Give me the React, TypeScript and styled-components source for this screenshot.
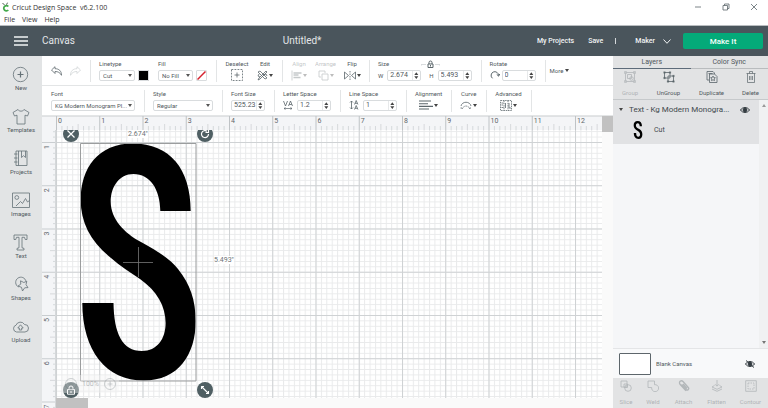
import React from "react";
import styled, { createGlobalStyle } from "styled-components";

const Global = createGlobalStyle`
  * { box-sizing: border-box; }
  html, body { margin: 0; }
  body, button, input, select {
    font-family: Roboto, "Liberation Sans", sans-serif;
    font-size: 6px;
    line-height: 9px;
    color: #50585d;
  }
  button { border: 0; padding: 0; background: none; cursor: pointer; }
  svg { display: block; flex: none; }
`;

const INCH = 43.25;

/* ---------- frame ---------- */
const App = styled.div`
  display: flex;
  flex-direction: column;
  height: 100vh;
  min-height: 400px;
  overflow: hidden;
  background: #fff;
`;
const TitleBar = styled.div`
  display: flex;
  align-items: center;
  justify-content: space-between;
  height: 14px;
  padding: 0 10px 0 1px;
  color: #333;
  font-family: "Open Sans", sans-serif;
`;
const AppName = styled.div`
  display: flex;
  align-items: center;
  gap: 2px;
  white-space: pre;
  font-size: 7px;
`;
const WindowButtons = styled.div`
  display: flex;
  align-items: center;
  gap: 20px;
`;
const MenuBar = styled.nav`
  display: flex;
  gap: 7px;
  height: 12px;
  padding: 0 4px;
  border-bottom: 1px solid #b9bdc0;
  button { font-family: "Open Sans", sans-serif; font-size: 7px; line-height: 11px; color: #333; }
`;
const Header = styled.header`
  display: grid;
  grid-template-columns: 14px 22% 1fr auto;
  align-items: center;
  height: 30px;
  padding: 0 5px 0 14px;
  column-gap: 14px;
  background: #4a555c;
  color: #e3e6e8;
  h1, h2 { margin: 0; font-size: 10px; line-height: 12px; font-weight: 400; }
`;
const DocTitle = styled.h2`
  padding-left: 62px;
`;
const HeaderActions = styled.div`
  display: flex;
  align-items: center;
  gap: 12px;
`;
const HeaderButton = styled.button`
  display: flex;
  align-items: center;
  gap: 8px;
  color: #f1f3f4;
  font-size: 7px;
  font-weight: 500;
  &:first-child { margin-right: 2px; }
`;
const HeaderRule = styled.span`
  width: 1px;
  height: 6px;
  margin-right: 7px;
  background: #d5d9dc;
`;
const MakeButton = styled.button`
  width: 80px;
  height: 16px;
  border-radius: 2px;
  background: #04aa79;
  color: #f4fffb;
  font-size: 8px;
  font-weight: 500;
`;
const Body = styled.div`
  display: flex;
  flex: 1;
  min-height: 0;
`;

/* ---------- left rail ---------- */
const Sidebar = styled.nav`
  width: 42px;
  flex: none;
  padding-top: 6px;
  background: #e2e4e5;
`;
const SideButton = styled.button`
  display: flex;
  flex-direction: column;
  align-items: center;
  width: 100%;
  height: 42px;
  padding-top: 3px;
`;

/* ---------- edit toolbars ---------- */
const Workspace = styled.main`
  display: flex;
  flex-direction: column;
  flex: 1;
  min-width: 0;
`;
const ToolRow = styled.div`
  display: flex;
  height: 30px;
  padding-left: 1px;
  border-bottom: 1px solid #e3e5e6;
  overflow: hidden;
`;
const Group = styled.div<{ $gap?: number }>`
  display: flex;
  flex: none;
  align-items: flex-start;
  gap: ${(p) => p.$gap ?? 8}px;
  height: 22px;
  margin-top: 4px;
  padding: 0 9px 0 8px;
  border-right: 1px solid #e3e5e6;
`;
const History = styled(Group)`
  align-items: center;
`;
const Field = styled.div<{ $center?: boolean; $faded?: boolean; $width?: number }>`
  display: flex;
  flex-direction: column;
  align-items: ${(p) => (p.$center ? "center" : "flex-start")};
  gap: 1px;
  width: ${(p) => (p.$width ? `${p.$width}px` : "auto")};
  margin-top: -1px;
  opacity: ${(p) => (p.$faded ? 0.35 : 1)};
  white-space: nowrap;
`;
const FieldRow = styled.div<{ $gap?: number }>`
  display: flex;
  align-items: center;
  gap: ${(p) => p.$gap ?? 3}px;
  height: 12px;
`;
const SelectBox = styled.span<{ $width: number }>`
  position: relative;
  width: ${(p) => p.$width}px;
  height: 11px;
  select {
    display: block;
    width: 100%;
    height: 100%;
    padding: 0 7px 0 3px;
    border: 1px solid #d9dcde;
    border-radius: 2px;
    background: #fff;
    appearance: none;
  }
  &::after {
    content: "";
    position: absolute;
    top: 4px;
    right: 3px;
    border: 2px solid transparent;
    border-top: 3px solid #555;
    border-bottom: 0;
    pointer-events: none;
  }
`;
const NumberBox = styled.span<{ $width: number }>`
  display: flex;
  align-items: center;
  width: ${(p) => p.$width}px;
  height: 11px;
  border: 1px solid #d9dcde;
  border-radius: 2px;
  background: #fff;
  input {
    flex: 1;
    min-width: 0;
    height: 9px;
    padding: 0 0 0 2px;
    border: 0;
    background: none;
    font-size: 7px;
  }
`;
const Swatch = styled.button<{ $color: string }>`
  width: 11px;
  height: 11px;
  border: 1px solid #d9dcde;
  border-radius: 1px;
  background: ${(p) => p.$color};
`;
const IconButton = styled.button`
  display: flex;
  align-items: center;
  height: 12px;
  gap: 1px;
`;
const MoreButton = styled.button`
  display: flex;
  align-items: center;
  gap: 2px;
  padding-left: 4px;
`;
const SizeHead = styled.div`
  display: flex;
  align-items: flex-end;
  gap: 32px;
  height: 9px;
`;

/* ---------- canvas ---------- */
const CanvasArea = styled.section`
  display: grid;
  grid-template-columns: 14px 1fr 11px;
  grid-template-rows: 14px 1fr 10px;
  flex: 1;
  min-height: 0;
  background: #f4f5f7;
`;
const TopRuler = styled.svg`
  grid-column: 1 / 3;
  width: 100%;
  height: 14px;
`;
const SideRuler = styled.svg`
  grid-row: 2 / 4;
  grid-column: 1;
  width: 14px;
  height: 100%;
  min-height: 0;
`;
const VerticalTrack = styled.div`
  grid-column: 3;
  grid-row: 1 / 4;
  background: #fafafa;
  &::before { content: ""; display: block; height: 16px; background: #c1c1c1; }
`;
const HorizontalTrack = styled.div`
  grid-column: 2;
  grid-row: 3;
  background: #fafafa;
  &::before { content: ""; display: block; width: 32px; height: 100%; background: #c1c1c1; }
`;
const Stage = styled.div`
  position: relative;
  grid-column: 2;
  grid-row: 2;
  overflow: hidden;
  background: #fff;
`;
const Grid = styled.svg`
  position: absolute;
  inset: 0;
  width: 100%;
  height: 100%;
`;
const Selection = styled.div`
  position: absolute;
  left: 24px;
  top: 13px;
  width: 117px;
  height: 239px;
`;
const Handle = styled.button<{ $right?: boolean; $bottom?: boolean }>`
  position: absolute;
  left: ${(p) => (p.$right ? 117 : -17)}px;
  top: ${(p) => (p.$bottom ? 239 : -17)}px;
  width: 16px;
  height: 16px;
  border-radius: 50%;
  background: #4f5f63;
  svg { margin: auto; }
`;
const Dimension = styled.span<{ $side?: boolean }>`
  position: absolute;
  left: ${(p) => (p.$side ? 134 : 48)}px;
  top: ${(p) => (p.$side ? 113 : -13)}px;
  background: #fff;
  color: #6d7376;
  font-size: 7px;
  line-height: 8px;
`;
const ZoomControl = styled.div`
  position: absolute;
  left: 6px;
  bottom: 5px;
  display: flex;
  align-items: center;
  gap: 5px;
  padding: 3px;
  border-radius: 2px;
  background: #f3f3f366;
  button, span { opacity: 0.35; }
  span { font-size: 7px; }
`;

/* ---------- layers panel ---------- */
const Panel = styled.aside`
  display: flex;
  flex-direction: column;
  flex: none;
  width: 155px;
  background: #f5f6f8;
`;
const Tabs = styled.div`
  display: flex;
  background: #e2e3e4;
`;
const Tab = styled.button<{ $active?: boolean }>`
  flex: 1;
  height: 13px;
  border-bottom: 1px solid ${(p) => (p.$active ? "#5d6b79" : "#b9bcbe")};
  font-size: 7px;
`;
const ActionRow = styled.div<{ $footer?: boolean }>`
  display: grid;
  grid-template-columns: ${(p) => (p.$footer ? "26px 28px 33px 33px 1fr" : "34px 43px 43px 1fr")};
  height: ${(p) => (p.$footer ? 30 : 31)}px;
  padding-top: 2px;
  border-bottom: ${(p) => (p.$footer ? 0 : 1)}px solid #c6c9cb;
  background: #e2e3e4;
`;
const Action = styled.button<{ $faded?: boolean }>`
  display: flex;
  flex-direction: column;
  align-items: center;
  gap: 5px;
  height: 26px;
  opacity: ${(p) => (p.$faded ? 0.35 : 1)};
`;
const LayerList = styled.div`
  display: flex;
  flex: 1;
  min-height: 0;
`;
const Layers = styled.div`
  flex: 1;
  min-width: 0;
`;
const LayerGroup = styled.div`
  height: 44px;
  background: #e1e2e4;
  color: #41494e;
`;
const LayerTitle = styled.div`
  display: flex;
  align-items: center;
  gap: 6px;
  height: 19px;
  padding: 0 9px 0 6px;
  font-size: 8px;
  white-space: nowrap;
  button { margin-left: auto; }
`;
const LayerItem = styled.div`
  display: flex;
  align-items: center;
  gap: 11px;
  height: 22px;
  padding-left: 20px;
  font-size: 7px;
`;
const Scrollbar = styled.div`
  display: flex;
  flex-direction: column;
  justify-content: space-between;
  align-items: center;
  width: 9px;
  padding: 4px 0;
  background: #f0f1f2;
`;
const BlankRow = styled.div`
  display: flex;
  align-items: center;
  gap: 5px;
  height: 30px;
  padding: 0 13px 0 6px;
  border-top: 1px solid #e4e5e7;
  background: #f8f9fa;
  button:last-child { margin-left: auto; }
`;
const CanvasSwatch = styled.button`
  width: 32px;
  height: 22px;
  border: 1px solid #5d666b;
  border-radius: 1px;
  background: #fff;
`;

/* ---------- icons ---------- */
type IconProps = { w: number; h?: number; color?: string; sw?: number; children: React.ReactNode };
const Icon = ({ w, h = w, color = "#5b666b", sw = 0.8, children }: IconProps) => (
  <svg width={w} height={h} viewBox={`0 0 ${w} ${h}`} fill="none" stroke={color} strokeWidth={sw} strokeLinejoin="round" aria-hidden="true">
    {children}
  </svg>
);
const Caret = () => (
  <Icon w={4} h={3}><path d="M0 0h4L2 3z" fill="#444" stroke="none" /></Icon>
);
const Spinner = () => (
  <Icon w={8} h={9}>
    <path d="M.5 0v9" stroke="#e1e3e4" />
    <path d="M2.300 4L4.300 1.200 6.300 4zM2.300 5.300h4L4.300 8z" fill="#444" stroke="none" />
  </Icon>
);

const sideItems: { label: string; art: React.ReactNode }[] = [
  { label: "New", art: <><circle cx="8.500" cy="9.500" r="7.200" /><path d="M8.500 6.500v6M5.500 9.500h6" strokeWidth="1.200" /></> },
  { label: "Templates", art: <path d="M6 2.500L1 5.500l1.500 3.500 2.500-.8V17h8V8.200l2.500.8L17 5.500l-5-3c-.8 2.200-5.200 2.200-6 0z" /> },
  { label: "Projects", art: <path d="M4 2h11v14.500H4zM6.500 2v14.500M9.500 2v6.500l2-1.800 2 1.800V2M2 5h3.500M2 9h3.500M2 13h3.500" /> },
  { label: "Images", art: <><rect x=".5" y="2" width="17" height="14.500" /><circle cx="4.800" cy="6.500" r="1.900" /><path d="M4 15l4.500-4.500 2 2 3-5 2 3.500 2-1.500" /></> },
  { label: "Text", art: <path d="M2 2h13v4.500h-1.800L12.500 4.300H10v10.500l2 .6v1.600H5v-1.600l2-.6V4.300H4.500L3.800 6.500H2z" /> },
  { label: "Shapes", art: <path d="M6.500 12A5.200 5.200 0 1 1 14 6.500M8.500 5.800l3.300 1.700 3-1.200-.8 3.300 2 3-3.300.2-2.200 3.200-1-3.700-3.500-1.200 2.800-2z" /> },
  { label: "Upload", art: <><path d="M4.500 15a3.500 3.500 0 0 1-.5-6.800A4.700 4.700 0 0 1 12.500 7.500 3.700 3.700 0 0 1 13 15z" /><path d="M7.300 13V11H5.800L8.500 7.800 11.200 11H9.700v2z" /></> },
];

const EyeArt = () => (
  <>
    <path d="M.5 4C2.500.7 7.500.7 9.500 4 7.500 7.300 2.500 7.300.5 4z" />
    <circle cx="5" cy="4" r="1.900" fill="#333b40" />
  </>
);

const actions: { label: string; faded?: boolean; art: React.ReactNode }[] = [
  { label: "Group", faded: true, art: <><path d="M1.500 1.500h9v9h-9z" /><path d="M3.500 3.500h4v4h-4z" /><circle cx="7.500" cy="7.500" r="1.800" /><path d="M.5.5h2v2h-2zM9.500.5h2v2h-2zM.5 9.500h2v2h-2zM9.500 9.500h2v2h-2z" fill="#8b9296" strokeWidth=".5" /></> },
  { label: "UnGroup", art: <><path d="M1.500 1.500h5.500v5.500H1.500zM5 5h5.500v5.500H5z" /><path d="M.7.700h1.600v1.600H.7zM6.200.700h1.600v1.600H6.200zM.7 6.200h1.600v1.600H.7zM9.700 4.200h1.600v1.600H9.700zM4.200 9.700h1.600v1.600H4.200zM9.700 9.700h1.600v1.600H9.700z" fill="#5b666b" strokeWidth=".3" /></> },
  { label: "Duplicate", art: <><path d="M3 9H1V.5h6L8.500 2v1M3.500 3h5L11 5.500v6H3.500z" /><path d="M7 5l.7 1.500 1.700.2-1.200 1.200.3 1.700L7 8.800l-1.500.8.3-1.700-1.200-1.200 1.700-.2zM2.500 2.500h4" /></> },
  { label: "Delete", art: <path d="M1.500 2.500h9M4.500 2.500v-2h3v2M2.500 2.500v9h7v-9M4.500 5v4M6 5v4M7.500 5v4" strokeWidth=".7" /> },
];

const footerActions: { label: string; art: React.ReactNode }[] = [
  { label: "Slice", art: <><path d="M1 1h6v6H1z" /><circle cx="8" cy="8" r="3.300" /><path d="M4 4h3.500v3.500H4z" /></> },
  { label: "Weld", art: <path d="M1 1h6.500v3.700A3.500 3.500 0 1 1 4.700 7.500H1z" /> },
  { label: "Attach", art: <path d="M3.500 4.500l4.500 5a1.500 1.500 0 0 0 2.300-2L5 1.500A2 2 0 0 0 2 4.200l6 6.500M5 4l4 4.500" strokeWidth="1.300" /> },
  { label: "Flatten", art: <path d="M6 0v6M4 4.200l2 2 2-2M3.500 5.500L1 7l5 2.300L11 7 8.500 5.500M1 9l5 2.300L11 9" /> },
  { label: "Contour", art: <><path d="M.7.700h10.600v10.600H.7z" /><path d="M3 3h6v6H3z" strokeDasharray="1.500 1" /></> },
];

/* ---------- field helpers ---------- */
const Select = ({ id, label, value, width, children }: { id: string; label: string; value: string; width: number; children?: React.ReactNode }) => (
  <Field>
    <label htmlFor={id}>{label}</label>
    <FieldRow>
      <SelectBox $width={width}>
        <select id={id} defaultValue={value}><option>{value}</option></select>
      </SelectBox>
      {children}
    </FieldRow>
  </Field>
);
const NumberInput = ({ id, value, width = 34 }: { id: string; value: string; width?: number }) => (
  <NumberBox $width={width}>
    <input id={id} defaultValue={value} />
    <Spinner />
  </NumberBox>
);
const Tool = ({ label, width, faded, caret = true, children }: { label: string; width?: number; faded?: boolean; caret?: boolean; children: React.ReactNode }) => (
  <Field $center $faded={faded} $width={width}>
    <span>{label}</span>
    <IconButton aria-label={label} disabled={faded}>{children}{caret && <Caret />}</IconButton>
  </Field>
);

/* ---------- rulers ---------- */
const ticks = (count: number) => Array.from({ length: count }, (_, i) => i);
const HorizontalRuler = () => (
  <TopRuler>
    <path d="M0 .5H3000" stroke="#dfe1e3" />
    {ticks(101).map((i) => {
      const x = 14.5 + (i * INCH) / 8;
      const top = i % 8 === 0 ? 0 : i % 4 === 0 ? 8 : 10;
      return <path key={i} d={`M${x} ${top}V14`} stroke={i % 8 === 0 ? "#bfc3c6" : "#c9cdd0"} strokeWidth={i % 8 === 0 ? 1 : 0.7} />;
    })}
    {ticks(13).map((n) => <text key={n} x={16 + n * INCH} y={7} fill="#5f666b" fontSize={7}>{n}</text>)}
  </TopRuler>
);
const VerticalRuler = () => (
  <SideRuler>
    {ticks(72).map((i) => {
      const n = i - 2;
      const y = 12.5 + (n * INCH) / 8;
      const left = n % 8 === 0 ? 0 : n % 4 === 0 ? 8 : 11;
      return <path key={i} d={`M${left} ${y}H14`} stroke="#c9cdd0" strokeWidth={n % 8 === 0 ? 1 : 0.7} />;
    })}
    {ticks(7).map((n) => (
      <text key={n} transform={`translate(7 ${19 + n * INCH}) rotate(-90)`} fill="#5f666b" fontSize={7}>{n + 1}</text>
    ))}
    <path d="M13.500 0V3000" stroke="#d5d8da" />
  </SideRuler>
);

const LETTER_S =
  "M80.3 68C80 46 70 31 53.500 31C39 31 30.700 44 30.700 59C31 76 44 90 61 99C80 109 92 118 98 126C110 141 115.700 157 115.700 178C115.700 212 98 237.500 64 237.500C26 237.500 2.500 208 2.300 160H33.500C34 190 42 208 62 208C77 208 85.600 196 85.600 180C85.600 163 77 148 60 136C50 129 40 123 31 115C11 99 .700 80 .700 57C.700 25 18 .500 53 .500C90 .500 110.700 26 110.700 68Z";

export default function DesignSpace() {
  return (
    <App>
      <Global />
      <TitleBar>
        <AppName>
          <Icon w={9} h={10} color="#45a94c" sw={1.8}>
            <path d="M7.300 4.500A2.600 2.600 0 1 0 7.300 8" />
            <path d="M3.500 3L1.500 1M5.500 2.700L6.500.7" stroke="#4d5a50" strokeWidth="1" />
          </Icon>
          <span>Cricut Design Space  v6.2.100</span>
        </AppName>
        <WindowButtons>
          <button aria-label="Minimize"><Icon w={8}><path d="M1 4h6" /></Icon></button>
          <button aria-label="Restore"><Icon w={8}><path d="M1 2.500h4.500V7H1zM2.500 2.500V1H7v4.500H5.500" /></Icon></button>
          <button aria-label="Close"><Icon w={8}><path d="M1 1l6 6M7 1L1 7" /></Icon></button>
        </WindowButtons>
      </TitleBar>
      <MenuBar>
        <button>File</button><button>View</button><button>Help</button>
      </MenuBar>

      <Header>
        <button aria-label="Menu"><Icon w={14} h={10} color="#f1f3f4" sw={1.3}><path d="M0 1h14M0 5h14M0 9h14" /></Icon></button>
        <h1>Canvas</h1>
        <DocTitle>Untitled*</DocTitle>
        <HeaderActions>
          <HeaderButton>My Projects</HeaderButton>
          <HeaderButton>Save</HeaderButton>
          <HeaderRule />
          <HeaderButton>Maker<Icon w={8} h={5} color="#f1f3f4" sw={1}><path d="M.5.5L4 4.300 7.500.5" /></Icon></HeaderButton>
          <MakeButton>Make It</MakeButton>
        </HeaderActions>
      </Header>

      <Body>
        <Sidebar>
          {sideItems.map((s) => (
            <SideButton key={s.label}>
              <Icon w={18} color="#657177">{s.art}</Icon>
              {s.label}
            </SideButton>
          ))}
        </Sidebar>

        <Workspace>
          <ToolRow>
            <History>
              <button aria-label="Undo"><Icon w={11} h={10}><path d="M.5 4L4 .7v2C8 2.700 10.500 5 10.500 9.300 9 6.500 7 5.500 4 5.500v2z" /></Icon></button>
              <button aria-label="Redo"><Icon w={11} h={10} color="#d0d4d6"><path d="M10.500 4L7 .7v2C3 2.700.5 5 .5 9.300 2 6.500 4 5.500 7 5.500v2z" /></Icon></button>
            </History>
            <Group $gap={9}>
              <Select id="linetype" label="Linetype" value="Cut" width={36}><Swatch $color="#000" aria-label="Linetype color" /></Select>
              <Select id="fill" label="Fill" value="No Fill" width={35}>
                <Swatch $color="#fff" aria-label="Fill color"><Icon w={9} color="#d5222f" sw={1.5}><path d="M.5 8.500L8.500.5" /></Icon></Swatch>
              </Select>
            </Group>
            <Group>
              <Tool label="Deselect" width={24} caret={false}>
                <Icon w={12}><path d="M.5.5h11v11H.5z" strokeDasharray="1.800 1.200" /><path d="M6 3.500v5M3.500 6h5" /></Icon>
              </Tool>
              <Tool label="Edit" width={16}>
                <Icon w={11}><path d="M1 2l7 7M3 1l7 7M1 2L3 1M10 8L8 9M10 2L3 9 1 10 2 8 9 1zM6 5l3-1 1 2M2 4L1 6l2 1" /></Icon>
              </Tool>
            </Group>
            <Group>
              <Tool label="Align" width={16} faded><Icon w={11}><path d="M1 .5v10" /><path d="M2.500 3h8M2.500 5h5M2.500 7.500h7" strokeWidth="1.300" /></Icon></Tool>
              <Tool label="Arrange" faded><Icon w={11}><path d="M3 7H1V1h6v2M4 4h6v6H4z" /></Icon></Tool>
              <Tool label="Flip" width={16}><Icon w={12} h={9}><path d="M.5 1v7L4.500 4.500zM11.500 1v7L7.500 4.500z" /><path d="M6 0v9" strokeDasharray="1.500 1" /></Icon></Tool>
            </Group>
            <Group>
              <Field>
                <SizeHead>
                  <span>Size</span>
                  <button aria-label="Lock proportions"><Icon w={19} h={8}><path d="M7 4h5v3.500H7zM8 4V2.500a1.500 1.500 0 0 1 3 0V4M9.500 5v1.500" strokeWidth="1" /><path d="M0 6V4.500h5M14 4.500h5V6" stroke="#cfd3d5" /></Icon></button>
                </SizeHead>
                <FieldRow $gap={4}>
                  <label htmlFor="w">W</label>
                  <NumberInput id="w" value="2.674" />
                  <span />
                  <label htmlFor="h">H</label>
                  <NumberInput id="h" value="5.493" />
                </FieldRow>
              </Field>
            </Group>
            <Group>
              <Field>
                <label htmlFor="rotate">Rotate</label>
                <FieldRow $gap={2}>
                  <Icon w={10} sw={1}><path d="M2.500 8.300A3.700 3.700 0 1 1 8.500 5.500M6.700 4.300l1.900 1.900L9.800 4" /></Icon>
                  <NumberInput id="rotate" value="0" />
                </FieldRow>
              </Field>
            </Group>
            <MoreButton>More <Caret /></MoreButton>
          </ToolRow>

          <ToolRow>
            <Group><Select id="font" label="Font" value="KG Modern Monogram Pl..." width={84} /></Group>
            <Group><Select id="style" label="Style" value="Regular" width={60} /></Group>
            <Group><Field $width={34}><label htmlFor="fs">Font Size</label><FieldRow><NumberInput id="fs" value="525.23" /></FieldRow></Field></Group>
            <Group>
              <Field $width={48}>
                <label htmlFor="ls">Letter Space</label>
                <FieldRow $gap={4}>
                  <Icon w={10}><path d="M.5 1l2 5 2-5M5.500 6l2-5 2 5M6.200 4.500h2.600" /><path d="M1 8.500h8M2.500 7.500L1 8.500l1.500 1M7.500 7.500l1.500 1-1.500 1" strokeWidth=".7" /></Icon>
                  <NumberInput id="ls" value="1.2" />
                </FieldRow>
              </Field>
            </Group>
            <Group>
              <Field $width={48}>
                <label htmlFor="lines">Line Space</label>
                <FieldRow $gap={4}>
                  <Icon w={10}><path d="M2.500 1v8M1 2.500L2.500 1 4 2.500M1 7.500L2.500 9 4 7.500M5.500 4.500l1.700-4 1.700 4M6 3.300h2.300M5.500 9.500l1.700-4 1.700 4M6 8.300h2.300" /></Icon>
                  <NumberInput id="lines" value="1" />
                </FieldRow>
              </Field>
            </Group>
            <Group><Tool label="Alignment"><Icon w={14} h={10} sw={1.1}><path d="M0 1h12M0 3.700h9M0 6.400h14M0 9h10" /></Icon></Tool></Group>
            <Group><Tool label="Curve"><Icon w={12} h={10}><path d="M1 6C2 1 10 1 11 6" /><path d="M2 9C4 5 8 5 10 9M.5 8h2M9.500 8h2" strokeDasharray="1.500 .8" /></Icon></Tool></Group>
            <Group><Tool label="Advanced"><Icon w={12} h={11}><path d="M.5.5h11v10H.5zM4 .5v10M8 .5v10" strokeDasharray="1.500 .8" /><path d="M1.500 3h2M1.500 5h1.500M1.500 7.500h2M5.500 3v5M9 3v5h2" /></Icon></Tool></Group>
          </ToolRow>

          <CanvasArea>
            <HorizontalRuler />
            <VerticalRuler />
            <VerticalTrack />
            <Stage>
              <Grid>
                <defs>
                  <pattern id="minor" width={INCH / 8} height={INCH / 8} x="0" y="12" patternUnits="userSpaceOnUse">
                    <path d={`M.5 0V${INCH}M0 .5H${INCH}`} stroke="#e9eaeb" strokeWidth="1" />
                  </pattern>
                  <pattern id="major" width={INCH} height={INCH} x="0" y="12" patternUnits="userSpaceOnUse">
                    <path d={`M.5 0V${INCH}M0 .5H${INCH}`} stroke="#cfd2d4" strokeWidth="1" />
                  </pattern>
                </defs>
                <rect width="100%" height="100%" fill="url(#minor)" />
                <rect width="100%" height="100%" fill="url(#major)" />
              </Grid>
              <Selection>
                <svg width="117" height="239" viewBox="0 0 117 239">
                  <path d={LETTER_S} fill="#000" />
                  <path d="M.5.5h115.500v237.500H.5z" fill="none" stroke="#9b9d9e" />
                  <path d="M43 119.500h30M58.500 104v30" stroke="#777" strokeWidth=".8" />
                </svg>
                <Dimension>2.674"</Dimension>
                <Dimension $side>5.493"</Dimension>
                <Handle aria-label="Delete selection"><Icon w={10} color="#fff" sw={1.2}><path d="M1.500 1.500l7 7M8.500 1.500l-7 7" /></Icon></Handle>
                <Handle $right aria-label="Rotate selection"><Icon w={10} color="#fff" sw={1.2}><path d="M8.500 5A3.500 3.500 0 1 1 7 2.200M8.500.5v3h-3" /></Icon></Handle>
                <Handle $bottom aria-label="Unlock proportions"><Icon w={10} color="#fff" sw={1}><path d="M1.500 4.500h7v4.700h-7zM3 4.500V3a2 2 0 0 1 4 0v1.500M5 6v2" /></Icon></Handle>
                <Handle $right $bottom aria-label="Resize selection"><Icon w={10} color="#fff" sw={1.1}><path d="M1.500 1.500l7 7M1.500 4V1.500H4M8.500 6v2.500H6" /></Icon></Handle>
              </Selection>
              <ZoomControl>
                <button aria-label="Zoom out"><Icon w={12}><circle cx="6" cy="6" r="5.500" /><path d="M3.500 6h5" /></Icon></button>
                <span>100%</span>
                <button aria-label="Zoom in"><Icon w={12}><circle cx="6" cy="6" r="5.500" /><path d="M3.500 6h5M6 3.500v5" /></Icon></button>
              </ZoomControl>
            </Stage>
            <HorizontalTrack />
          </CanvasArea>
        </Workspace>

        <Panel>
          <Tabs><Tab $active>Layers</Tab><Tab>Color Sync</Tab></Tabs>
          <ActionRow>
            {actions.map((a) => <Action key={a.label} $faded={a.faded} disabled={a.faded}><Icon w={12}>{a.art}</Icon>{a.label}</Action>)}
          </ActionRow>
          <LayerList>
            <Layers>
              <LayerGroup>
                <LayerTitle>
                  <Caret />
                  <span>Text - Kg Modern Monogra...</span>
                  <button aria-label="Hide layer"><Icon w={10} h={8} color="#333b40" sw={1}><EyeArt /></Icon></button>
                </LayerTitle>
                <LayerItem>
                  <svg width="10" height="18" viewBox="0 0 116 238"><path d={LETTER_S} fill="#000" /></svg>
                  <span>Cut</span>
                </LayerItem>
              </LayerGroup>
            </Layers>
            <Scrollbar>
              <Icon w={4} h={3}><path d="M0 3h4L2 0z" fill="#999" stroke="none" /></Icon>
              <Icon w={4} h={3}><path d="M0 0h4L2 3z" fill="#777" stroke="none" /></Icon>
            </Scrollbar>
          </LayerList>
          <BlankRow>
            <CanvasSwatch aria-label="Canvas color" />
            <span>Blank Canvas</span>
            <button aria-label="Show canvas"><Icon w={10} h={8} color="#333b40" sw={1}><EyeArt /><path d="M1 .5l8 7" /></Icon></button>
          </BlankRow>
          <ActionRow $footer>
            {footerActions.map((a) => <Action key={a.label} $faded disabled><Icon w={12}>{a.art}</Icon>{a.label}</Action>)}
          </ActionRow>
        </Panel>
      </Body>
    </App>
  );
}
